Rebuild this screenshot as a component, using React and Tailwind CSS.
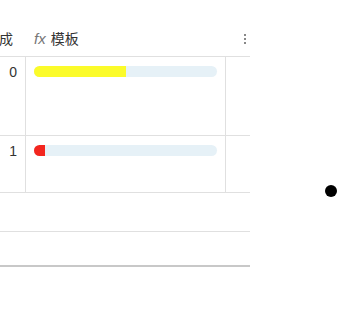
const rows = [
  { value: 0, pct: 50, color: "bg-[#fbfb2a]", h: "h-[79px]" },
  { value: 1, pct: 6, color: "bg-[#f3261f]", h: "h-[57px]" },
];

const App = () => {
  return (
    <div
      className="relative w-[338px] h-[317px] bg-white text-[#333] text-sm"
      style={{ fontFamily: '"Liberation Sans", "Noto Sans CJK SC", sans-serif' }}
    >
      <div className="w-[250px]">
        {/* header */}
        <div className="flex items-center h-[57px] pt-[22px] border-b border-[#e0e0e0]">
          <div className="w-[26px] flex justify-end overflow-hidden pr-[13px] whitespace-nowrap">
            <span>完成</span>
          </div>
          <div className="w-[200px] flex items-center pl-[8px] gap-[5px]">
            <span className="italic text-[#777] text-[15px] leading-5">fx</span>
            <span>模板</span>
          </div>
          <div className="flex-1 flex flex-col items-end pr-[4px] gap-[2px]">
            <span className="w-[2px] h-[2px] bg-[#888]" />
            <span className="w-[2px] h-[2px] bg-[#888]" />
            <span className="w-[2px] h-[2px] bg-[#888]" />
          </div>
        </div>

        {rows.map((row) => (
          <div key={row.value} className={`flex ${row.h} border-b border-[#e0e0e0]`}>
            <div className="w-[26px] border-r border-[#e0e0e0] text-right pr-[8px] pt-[5px] leading-5">
              {row.value}
            </div>
            <div className="w-[200px] border-r border-[#e0e0e0] px-[8px] pt-[9px]">
              <div className="h-[11px] rounded-full bg-[#e6f1f7] overflow-hidden">
                <div className={`h-full ${row.color}`} style={{ width: `${row.pct}%` }} />
              </div>
            </div>
            <div className="flex-1" />
          </div>
        ))}

        <div className="h-[39px] border-b border-[#e0e0e0]" />
        <div className="h-[35px] border-b-2 border-[#c8c8c8]" />
      </div>

      <div className="absolute left-[325px] top-[185px] w-[12px] h-[12px] rounded-full bg-black" />
    </div>
  );
};

export default App;
